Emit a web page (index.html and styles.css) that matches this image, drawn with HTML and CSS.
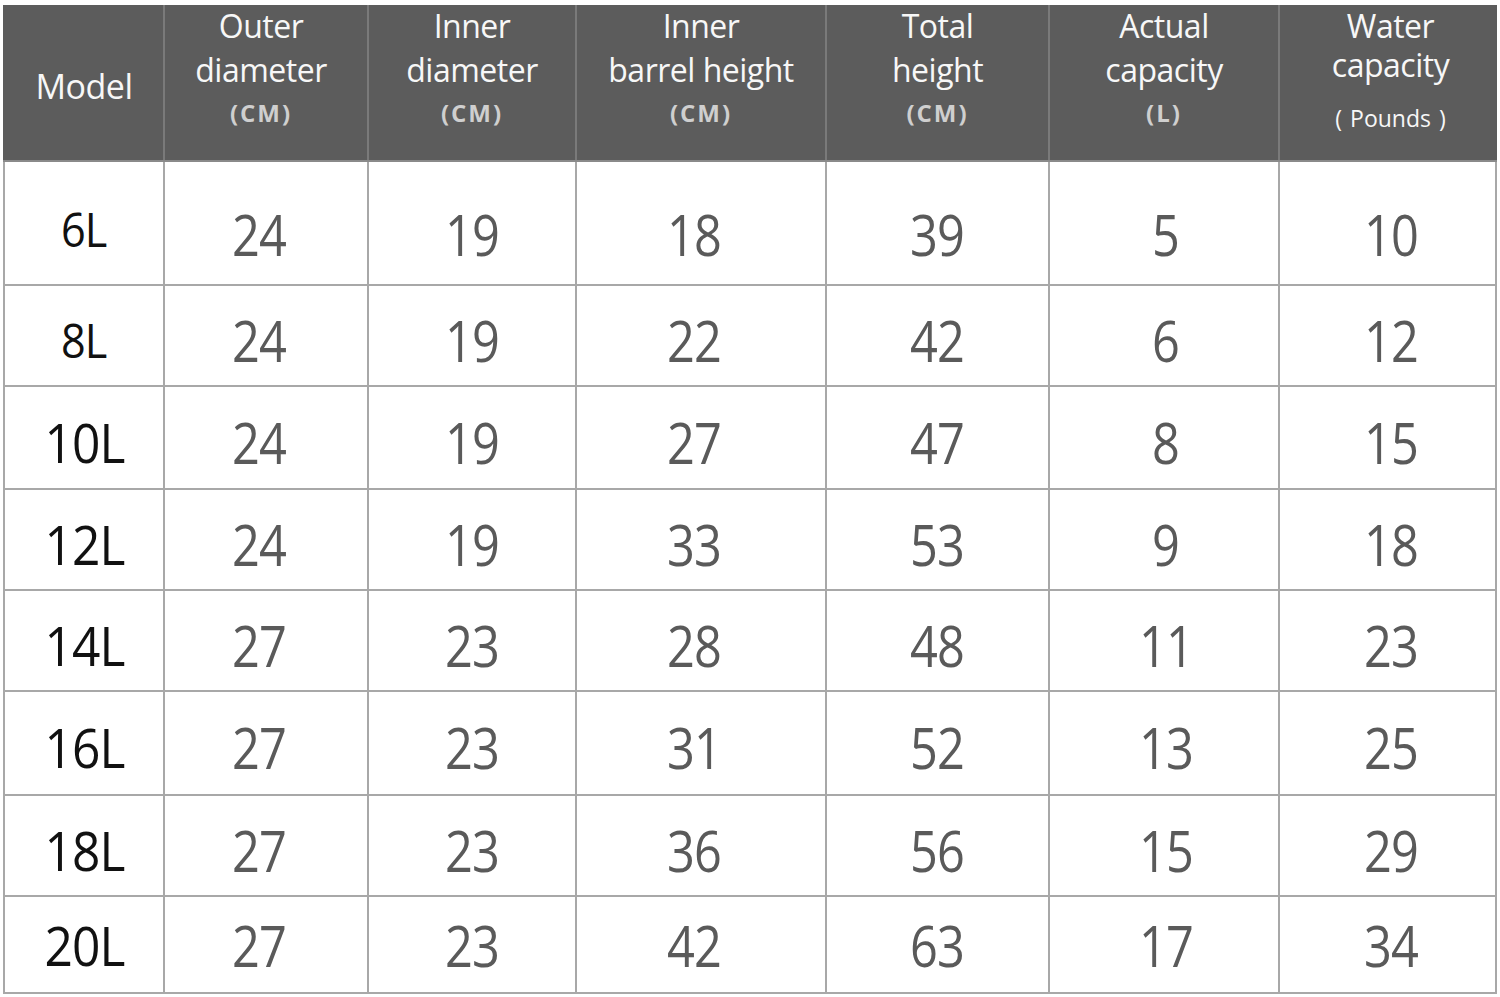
FILE: index.html
```
<!DOCTYPE html>
<html lang="en">
<head>
<meta charset="utf-8">
<title>Size chart</title>
<link rel="stylesheet" href="styles.css">
</head>
<body>
<table class="chart">
  <colgroup>
    <col class="c-model">
    <col class="c-outer">
    <col class="c-inner">
    <col class="c-barrel">
    <col class="c-total">
    <col class="c-actual">
    <col class="c-water">
  </colgroup>
  <thead>
    <tr class="head">
      <th class="h-model">Model</th>
      <th><span class="l1">Outer</span><span class="l2">diameter</span><span class="unit">(CM)</span></th>
      <th><span class="l1">Inner</span><span class="l2">diameter</span><span class="unit">(CM)</span></th>
      <th><span class="l1">Inner</span><span class="l2">barrel height</span><span class="unit">(CM)</span></th>
      <th><span class="l1">Total</span><span class="l2">height</span><span class="unit">(CM)</span></th>
      <th><span class="l1">Actual</span><span class="l2">capacity</span><span class="unit">(L)</span></th>
      <th><span class="l1">Water</span><span class="l2 tight">capacity</span><span class="unit pounds">( Pounds )</span></th>
    </tr>
  </thead>
  <tbody>
    <tr class="r1"><td class="model small"><span>6L</span></td><td><span>24</span></td><td><span>19</span></td><td><span>18</span></td><td><span>39</span></td><td><span>5</span></td><td><span>10</span></td></tr>
    <tr class="r2"><td class="model small"><span>8L</span></td><td><span>24</span></td><td><span>19</span></td><td><span>22</span></td><td><span>42</span></td><td><span>6</span></td><td><span>12</span></td></tr>
    <tr class="r3"><td class="model"><span>10L</span></td><td><span>24</span></td><td><span>19</span></td><td><span>27</span></td><td><span>47</span></td><td><span>8</span></td><td><span>15</span></td></tr>
    <tr class="r4"><td class="model"><span>12L</span></td><td><span>24</span></td><td><span>19</span></td><td><span>33</span></td><td><span>53</span></td><td><span>9</span></td><td><span>18</span></td></tr>
    <tr class="r5"><td class="model"><span>14L</span></td><td><span>27</span></td><td><span>23</span></td><td><span>28</span></td><td><span>48</span></td><td><span>11</span></td><td><span>23</span></td></tr>
    <tr class="r6"><td class="model"><span>16L</span></td><td><span>27</span></td><td><span>23</span></td><td><span>31</span></td><td><span>52</span></td><td><span>13</span></td><td><span>25</span></td></tr>
    <tr class="r7"><td class="model"><span>18L</span></td><td><span>27</span></td><td><span>23</span></td><td><span>36</span></td><td><span>56</span></td><td><span>15</span></td><td><span>29</span></td></tr>
    <tr class="r8"><td class="model"><span>20L</span></td><td><span>27</span></td><td><span>23</span></td><td><span>42</span></td><td><span>63</span></td><td><span>17</span></td><td><span>34</span></td></tr>
  </tbody>
</table>
</body>
</html>
```

FILE: styles.css
```
html, body {
  margin: 0;
  padding: 0;
  background: #ffffff;
}

body {
  padding: 5px 0 0 3px;
  font-family: "Open Sans", "Noto Sans", "DejaVu Sans", sans-serif;
}

.chart {
  border-collapse: collapse;
  table-layout: fixed;
  width: 1492px;
}

.c-model { width: 160px; }
.c-outer { width: 204px; }
.c-inner { width: 208px; }
.c-barrel { width: 250px; }
.c-total { width: 223px; }
.c-actual { width: 230px; }
.c-water { width: 217px; }

.head th {
  box-sizing: border-box;
  height: 156px;
  padding: 0;
  background: #5c5c5c;
  color: #f7f7f7;
  font-weight: 400;
  vertical-align: top;
  text-align: center;
  border: 2px solid #7a7a7a;
  border-top: 0;
  border-bottom: 2px solid #8a8a8a;
}

.head th:first-child { border-left: 2px solid #5c5c5c; }
.head th:last-child { border-right: 2px solid #5c5c5c; }
.head th:nth-child(2) { padding-right: 10px; }
.head th:last-child { padding-left: 6px; }

.head .h-model {
  vertical-align: middle;
  font-size: 34px;
  padding-top: 6px;
  letter-spacing: -0.5px;
}

.l1, .l2 {
  display: block;
  font-size: 32px;
  line-height: 44px;
  letter-spacing: -0.5px;
}

.l1 { margin-top: -1px; }

.l2.tight { line-height: 38px; margin-top: -2px; }

.unit {
  display: block;
  margin-top: 5px;
  font-size: 24px;
  line-height: 32px;
  font-weight: 700;
  color: #cfcfcf;
  letter-spacing: 2px;
}

.unit.pounds {
  margin-top: 18px;
  font-size: 23px;
  font-weight: 400;
  color: #f7f7f7;
  letter-spacing: 0;
  word-spacing: 2px;
}

tbody td {
  box-sizing: border-box;
  padding: 8px 0 0;
  border: 2px solid #a8a8a8;
  text-align: center;
  vertical-align: middle;
  font-size: 56px;
  line-height: 60px;
  color: #5a5a5a;
}

tbody td:nth-child(2) { padding-right: 14px; }
tbody td:nth-child(4) { padding-right: 14px; }
tbody td:nth-child(6) { padding-left: 4px; }
tbody td:nth-child(7) { padding-left: 8px; }

tbody td span {
  display: inline-block;
  transform: scaleX(0.87);
  letter-spacing: -1px;
}

tbody td.model {
  color: #111111;
  font-size: 54px;
}

tbody td.model span {
  transform: scaleX(0.92);
}

tbody td.model.small {
  font-size: 47px;
}

.r1 td { height: 124px; padding-top: 22px; }
.r1 td.model { padding-top: 12px; }
.r2 td { height: 101px; }
.r3 td { height: 103px; }
.r4 td { height: 101px; }
.r5 td { height: 101px; }
.r6 td { height: 104px; }
.r7 td { height: 101px; }
.r8 td { height: 97px; padding-top: 0; }
```
